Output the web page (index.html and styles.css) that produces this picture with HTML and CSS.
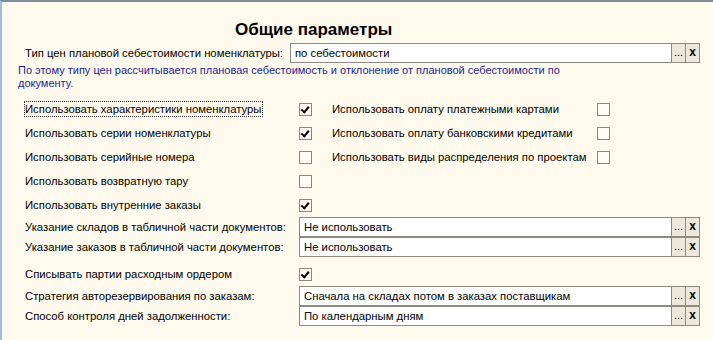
FILE: index.html
```html
<!DOCTYPE html>
<html lang="ru">
<head>
    <meta charset="UTF-8" />
    <title>Общие параметры</title>
    <link rel="stylesheet" href="styles.css">
</head>
<body>
    <div class="form">
        <h1 class="title">Общие параметры</h1>

        <div class="field field-top">
            <label>Тип цен плановой себестоимости номенклатуры:</label>
            <div class="picker">
                <span class="picker-value">по себестоимости</span>
                <span class="picker-btn">...</span>
                <span class="picker-btn picker-clear">x</span>
            </div>
        </div>

        <p class="hint">По этому типу цен рассчитывается плановая себестоимость и отклонение от плановой себестоимости по документу.</p>

        <div class="checks">
            <label class="focused">Использовать характеристики номенклатуры</label>
            <span class="box checked"></span>
            <label>Использовать оплату платежными картами</label>
            <span class="box"></span>

            <label>Использовать серии номенклатуры</label>
            <span class="box checked"></span>
            <label>Использовать оплату банковскими кредитами</label>
            <span class="box"></span>

            <label>Использовать серийные номера</label>
            <span class="box"></span>
            <label>Использовать виды распределения по проектам</label>
            <span class="box"></span>

            <label>Использовать возвратную тару</label>
            <span class="box"></span>
            <span></span><span></span>

            <label>Использовать внутренние заказы</label>
            <span class="box checked"></span>
            <span></span><span></span>
        </div>

        <div class="fields">
            <div class="field">
                <label>Указание складов в табличной части документов:</label>
                <div class="picker">
                    <span class="picker-value">Не использовать</span>
                    <span class="picker-btn">...</span>
                    <span class="picker-btn picker-clear">x</span>
                </div>
            </div>
            <div class="field">
                <label>Указание заказов в табличной части документов:</label>
                <div class="picker">
                    <span class="picker-value">Не использовать</span>
                    <span class="picker-btn">...</span>
                    <span class="picker-btn picker-clear">x</span>
                </div>
            </div>
        </div>

        <div class="checks checks-single">
            <label>Списывать партии расходным ордером</label>
            <span class="box checked"></span>
        </div>

        <div class="fields">
            <div class="field">
                <label>Стратегия авторезервирования по заказам:</label>
                <div class="picker">
                    <span class="picker-value">Сначала на складах потом в заказах поставщикам</span>
                    <span class="picker-btn">...</span>
                    <span class="picker-btn picker-clear">x</span>
                </div>
            </div>
            <div class="field">
                <label>Способ контроля дней задолженности:</label>
                <div class="picker">
                    <span class="picker-value">По календарным дням</span>
                    <span class="picker-btn">...</span>
                    <span class="picker-btn picker-clear">x</span>
                </div>
            </div>
        </div>
    </div>
</body>
</html>
```

FILE: styles.css
```css
body {
    margin: 0;
    font-family: 'Liberation Sans', Arial, sans-serif;
    font-size: 11.3px;
    color: #000;
    background-color: #fffaee;
}

.form {
    height: 338px;
    border-top: 2px solid #7d8b9b;
    border-left: 2px solid #9fbcd9;
    padding-left: 23px;
}

.title {
    margin: 15px 0 0 210px;
    font-size: 17px;
    line-height: 26px;
    font-weight: bold;
}

.field {
    display: flex;
    align-items: center;
    height: 20px;
}

.field label {
    width: 274px;
    flex-shrink: 0;
    white-space: nowrap;
}

.field-top label {
    width: 265px;
}

.picker {
    display: flex;
    width: 401px;
    height: 20px;
    box-sizing: border-box;
}

.field-top .picker {
    width: 410px;
}

.picker-value {
    flex: 1;
    height: 20px;
    box-sizing: border-box;
    border: 1px solid #8e8a7f;
    background-color: #fff;
    padding: 0 4px;
    line-height: 18px;
    white-space: nowrap;
}

.picker-btn {
    width: 14px;
    height: 20px;
    box-sizing: border-box;
    border: 1px solid #8e8a7f;
    border-left: none;
    background-color: #ece8dc;
    text-align: center;
    line-height: 17px;
    font-size: 11px;
}

.picker-clear {
    font-weight: bold;
    font-size: 12px;
}

.hint {
    margin: 1px 0 0 -7px;
    width: 560px;
    font-size: 11px;
    color: #1d1d8e;
    line-height: 13px;
}

.checks {
    display: grid;
    grid-template-columns: 274px 13px 20px 265px 13px;
    grid-auto-rows: 24px;
    align-items: center;
    margin-top: 7px;
    white-space: nowrap;
}

.checks label:nth-child(4n+3) {
    grid-column: 4;
}

.checks span:nth-child(4n) {
    grid-column: 5;
}

.checks-single {
    margin-top: 5px;
}

.focused {
    justify-self: start;
    outline: 1px dotted #333;
    padding: 1px 1px 1px 0;
}

.box {
    width: 13px;
    height: 13px;
    box-sizing: border-box;
    border: 1px solid #8a877d;
    background-color: #fffdf6;
    position: relative;
}

.box.checked::after {
    content: "";
    position: absolute;
    left: 2px;
    top: 1px;
    width: 3px;
    height: 6px;
    border: solid #000;
    border-width: 0 2px 2px 0;
    transform: rotate(40deg);
    transform-origin: 60% 60%;
}
```
